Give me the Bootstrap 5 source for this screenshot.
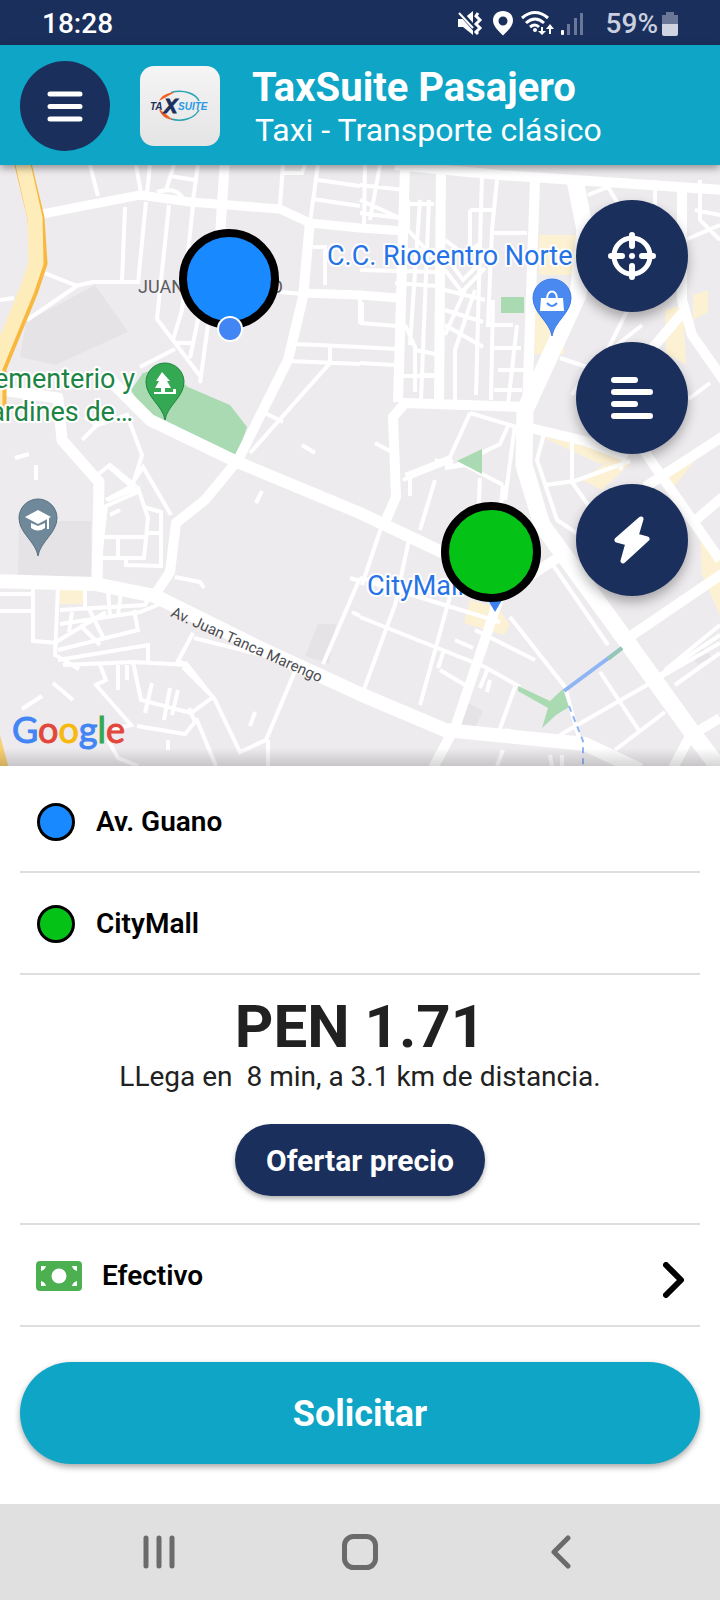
<!DOCTYPE html>
<html lang="es">
<head>
<meta charset="utf-8">
<meta name="viewport" content="width=device-width, initial-scale=1">
<title>TaxSuite Pasajero</title>
<link rel="stylesheet" href="https://cdn.jsdelivr.net/npm/bootstrap@5.3.0/dist/css/bootstrap.min.css">
<style>
  :root { --navy: #1a2f5c; --teal: #0ea5c6; }
  body { font-family: Roboto, "Liberation Sans", sans-serif; color: #212121; background: #fff; }
  svg { display: block; flex: none; }
  .status-bar { background: var(--navy); height: 45px; padding: 2px 42px 0; font-size: 28px; font-weight: 500; line-height: 43px; color: #fff; }
  .battery-text { color: #c9cfde; }
  .app-bar { background: var(--teal); height: 120px; padding: 2px 20px 0; color: #fff; position: relative; z-index: 2; box-shadow: 0 3px 8px rgba(0,0,0,.4); }
  .round-btn { background: var(--navy); border: 0; border-radius: 50%; color: #fff; display: flex; align-items: center; justify-content: center; padding: 0; }
  .menu-btn { width: 90px; height: 90px; }
  .app-logo { width: 80px; height: 80px; border-radius: 14px; background: linear-gradient(#f5f5f5, #e4e4e4); margin-left: 30px; }
  .app-names { padding: 4px 0 0 32px; }
  .app-title { font-size: 40px; line-height: 44px; font-weight: 700; margin: 0; }
  .app-sub { font-size: 32px; line-height: 40px; padding-left: 3px; margin: 0; }
  .map-box { background: #eeebef; overflow: hidden; }
  .map-box > svg { width: 100%; height: auto; }
  .map-box::after { content: ""; position: absolute; left: 0; right: 0; bottom: 0; height: 18px; background: linear-gradient(transparent, rgba(0,0,0,.16)); }
  .map-tools { position: absolute; top: 35px; right: 32px; gap: 30px; z-index: 1; }
  .fab { width: 112px; height: 112px; box-shadow: 0 6px 12px rgba(0,0,0,.3); }
  .sheet { padding: 5px 20px 40px; }
  .line-row { height: 102px; border: 0; border-bottom: 2px solid #dedede; background: none; width: 100%; padding: 2px 15px 0; font-size: 28px; font-weight: 600; color: #000; text-align: left; }
  .place-dot { width: 38px; height: 38px; border-radius: 50%; border: 3px solid #000; margin: 0 21px 0 2px; }
  .dot-blue { background: #1989ff; }
  .dot-green { background: #05c217; }
  .row-label { margin-left: 20px; }
  .fare { border-bottom: 2px solid #dedede; height: 250px; padding-top: 20px; text-align: center; }
  .fare-price { font-size: 60px; line-height: 64px; font-weight: 700; margin: 0; }
  .fare-eta { font-size: 28px; line-height: 36px; margin: 0; white-space: pre-wrap; }
  .offer-btn { background: var(--navy); color: #fff; border: 0; border-radius: 36px; width: 250px; height: 72px; font-size: 30px; font-weight: 700; margin-top: 29px; box-shadow: 0 3px 5px rgba(0,0,0,.3); }
  .request-btn { background: var(--teal); color: #fff; border: 0; border-radius: 51px; width: 100%; height: 102px; padding-top: 3px; font-size: 36px; font-weight: 700; margin-top: 35px; box-shadow: 0 3px 6px rgba(0,0,0,.35); }
  .sys-nav { background: #e0e0e0; height: 96px; padding: 0 58px; }
  .sys-nav button { background: none; border: 0; padding: 0; flex: 1; display: flex; justify-content: center; }
  .label-big { font-size: 27px; paint-order: stroke; stroke: #fff; stroke-width: 4px; stroke-linejoin: round; }
</style>
</head>
<body>
<div class="status-bar d-flex align-items-center">
  <span class="me-auto">18:28</span>
  <svg width="136" height="43" viewBox="456 1 136 43" fill="#fff" aria-hidden="true">
    <path d="M460 18h5l10-8v24l-10-8h-5z"/>
    <path d="M460 9l17 19" stroke="#1a2f5c" stroke-width="5"/><path d="M461 12l14 15" stroke="#fff" stroke-width="2"/>
    <path d="M480 12l-2 3 4 4-4 4 4 4-4 4 2 2" fill="none" stroke="#fff" stroke-width="3"/>
    <path d="M505 10c-6 0-10 4-10 9.500 0 6 6 11 10 15 4-4 10-9 10-15 0-5.500-4-9.500-10-9.500zm0 5.500a4.500 4.500 0 110 9 4.500 4.500 0 010-9z" fill-rule="evenodd"/>
    <g fill="none" stroke="#fff" stroke-width="3"><path d="M524 17q13-11 26 0M528 22q9-8 18 0M532 26q5-4 9 0"/></g>
    <circle cx="537" cy="29" r="2"/>
    <path d="M544 26v5M552 33v-6" stroke="#fff" stroke-width="2"/><path d="M540 30h8l-4 4zM548 28h8l-4-5z"/>
    <rect x="563" y="29" width="3" height="5" rx="1"/>
    <g fill="#6b7796"><rect x="569" y="23" width="3" height="11"/><rect x="576" y="17" width="3" height="17"/><rect x="582" y="12" width="3" height="22"/></g>
  </svg>
  <span class="battery-text ms-3">59%</span>
  <svg width="16" height="24" viewBox="0 0 16 24" class="ms-1" aria-hidden="true"><path d="M4 0h8v3h4v9H0V3h4z" fill="#6b7796"/><path d="M0 12h16v10q0 2-2 2H2q-2 0-2-2z" fill="#d0d4e0"/></svg>
</div>

<header class="app-bar d-flex align-items-center">
  <button class="round-btn menu-btn flex-shrink-0" type="button" aria-label="Menú">
    <svg width="36" height="32" viewBox="0 0 36 32" stroke="#fff" stroke-width="5" stroke-linecap="round"><path d="M3 4h30M3 16.500h30M3 29h30"/></svg>
  </button>
  <div class="app-logo d-flex align-items-center justify-content-center flex-shrink-0">
    <svg width="64" height="34" viewBox="0 0 64 34">
      <path d="M23 3.500C36 0 48 5 51 12M51 21C46 30 34 33 23 30" fill="none" stroke="#2aa3b5" stroke-width="1.500"/>
      <path d="M11 12C14 6 19 4 27 3l-7 4zM11 20C13 27 18 30 25 31l-6-5z" fill="#ef5f22"/>
      <g font-family="'Liberation Sans', sans-serif" font-style="italic" font-weight="700"><text x="2" y="21" font-size="10" fill="#1a2f5c">TA</text><text x="16" y="24" font-size="20" fill="#1a2f5c" stroke="#1a2f5c">X</text><text x="30" y="21" font-size="10" fill="#279be6">SUITE</text></g>
    </svg>
  </div>
  <div class="app-names">
    <h1 class="app-title">TaxSuite Pasajero</h1>
    <p class="app-sub">Taxi - Transporte clásico</p>
  </div>
</header>

<main>
<section class="map-box position-relative" aria-label="Mapa">
  <svg viewBox="0 165 720 601" font-family="Roboto, sans-serif">
    <!-- building and shop areas -->
    <g fill="#e6e3e7"><path d="M95 285l33 47-73 33-35-8 6-35zM19 521h72v62H18zM318 624h18l-7 40-24-8zM468 703l15 8-12 25-12-8zM700 645l12 12-14 7-8-8z"/></g>
    <g fill="#fdf1d3"><path d="M539 235h38v40h-38zM535 310h20l10 44h-31zM60 590h24v14H60zM470 600l28 8 12 17-6 10-40-12zM665 310l18-5 3 60-20-12zM693 295l15-5v22l-15 8zM582 480l40-28 10 10-30 28zM540 436l90 20-30 8zM700 525l20 30v60l-18-40zM665 478l30-18-22 28z"/></g>
    <!-- side streets -->
    <g fill="none" stroke="#fff" stroke-width="4">
      <path d="M90 165l8 31M136 165l5 28M150 165l-3 28M174 165l-8 25M198 165l-5 35M170 176l25 4M125 207l-3 74M146 202l-8 81M169 205l-12 114 43 57M193 205l-11 105-9 30M200 310l-10 48M208 325l-8 58M157 192q20-6 26 7"/>
      <path d="M42 272l35 14-50 34M75 286l18-4h47M0 300l14-2M283 165l-3 40M305 165l-3 8h-18M318 165l-8 57M318 180l42 6M313 199l47 7M313 247h12v38M360 294v30M280 292l23 2M295 344l65 3M289 361l71 3M330 345v18l-80 90M265 413l18 9M302 445l13 8M140 367l35-18M175 343h17"/>
      <path d="M82 440l15-15 30-10 15 40-10 32M82 440l15-15-12-8M15 458l14-4M36 465v15M107 465l25 22M130 487l13-20 28 48M97 475l13-10 24 20-28 15M108 500l30-12 10 30-4 40h-44l6-52 32-14M101 537h43M118 537v20M144 507l17 5v54l-35-1v-8M148 533h15M110 515l10-5"/>
      <path d="M0 594h33M0 611h31M33 588v53l25 2M58 587l-3 68 24 14M85 590v20M60 610l85-5 8-15M60 624l80-12 20-8M72 612l-3 20M88 607l15 30M108 591l2 24M121 593l-3 22M58 650l80-20-4-20M56 642l50-30M80 625l20 20M58 660l90-15v18M63 665l70-3 55 3-10-4 15-28M100 665l6 15-10 5 35 40-20 5M133 662l8 38 50 13 22-16-30-30M137 726l48 8 10-12-6-14M118 665v25M127 665v15M152 683l-7 30M170 688l-6 32M178 690l-6 25M168 740v10M185 662l30 38 25 52 26-12 32-76-104-26M196 718l20 48M108 740l10 18 20 8M53 683l20 17M22 709l20-13"/>
      <path d="M255 712l-5 14M262 491l-6 12M175 577l25 5 4 6M268 740v26M360 578l-37 86M350 578l10 3M360 616l-8-4"/>
      <path d="M365 165l-1 60M380 165l-10 55M360 185l45 5M360 200l40 18M360 213l40 5M408 204h26M408 200v30l24 26M420 200l-10 145M429 200l-8 200M482 175l-2 70-4 150M497 180l-5 50-4 95h25M470 210h24M470 210v55M494 233h33M493 300l-2 100M517 325l-9 80M491 348h30M498 370h26M494 390h28M445 240l20 15 15-12M445 255l18 25 20-20M445 270l17 22 23-24M445 290l40 10M445 310l38 12M445 325l38 22M465 290l-20 45M475 290l-20 60v50M415 350l25 5M420 375h20M400 250h35M360 270l78 2M395 283l43 3M360 323l37 3M360 347l36 2M360 363l34 2M362 302v20M397 376h40M405 325l10 22v45"/>
      <path d="M470 413l50 15M470 413l-20 44-45 18M508 426l-8 18-45 22-20-6M375 443l15 8M445 468l20-3 38 20M503 485l-5 50M515 425l-10 75M480 478l-4 90M435 480l-15 50M403 480l50-20M410 478v18M545 430l-8 30 20 60 30 20M572 440v42l35 50M545 485l30-4 55-20M572 395l20-30 50-40M600 365l30-60M560 358l60 20 70 20 20-15M640 420l-20 50M655 180v25M588 195l20-8 15 25M700 180v40l20 20M695 210l25 5M685 240l35-15"/>
      <path d="M387 522l40 20M382 525l-20 60M410 535l-15 70-35 95M460 560l-40 145M360 617l125 50 35 20M370 582l130 40M440 670l25 15M488 668l-8 20M455 640l18 8M444 650l-6 18M360 578l60 15M510 617l55 70 15 55M475 630l60 30M553 565l55 80M515 687l-18 50M505 730l30 8M560 735l160-92M660 675l60-40M600 672l40 60M615 750l50-38M675 685l45-32M665 670l55-45M503 750l-6 16M550 755l2 11M562 755v11M490 680l-3 12"/>
    </g>
    <!-- parks -->
    <g fill="#a9dab2"><path d="M131 390l12-17 20-6 25 20 42 18 17 22-11 32-46-18-41-22z"/><path d="M501 297h23v16h-23zM457 461l25-12v25zM518 686l32 15 13-12 6 18-13 8-14 13 6-20-30-17z"/></g>
    <!-- main roads -->
    <g fill="none" stroke="#fff" stroke-linejoin="round">
      <path d="M42 214l98-19 50 7 90 7 30 14 50 5 45 3M303 293l57 2 38 3" stroke-width="9"/>
      <path d="M225 160l-6 90M310 222l-7 75-15 63-50 100-33 40-29 23-6 49-16 24" stroke-width="10"/>
      <path d="M0 390l58 8 4 42 37 42-2 102" stroke-width="11"/>
      <path d="M108 378l42 42 85 41 125 52 130 62" stroke-width="12"/>
      <path d="M-5 581l100 3 60 12 105 52 100 46 85 36 140 14 55 26" stroke-width="14"/>
      <path d="M441 168l-2 235M405 167l-7 235M385 522l11-25-3-80 12-14 120 4M535 180l-8 230" stroke-width="10"/>
      <path d="M395 165l105 10 225 15" stroke-width="10"/>
      <path d="M575 180l10 50-7 65-53 115-1 55 18 60 80 110 72 100 31 40" stroke-width="17"/>
      <path d="M682 185v115l10 35 35 50M685 310l-60 70M530 428l55 13 40 15M640 445l80 115M725 435l-80 52M570 550l-70 45-44 130-24 45M725 572l-100 68M720 718l-30 18-18 34M690 525l35-30" stroke-width="10"/>
    </g>
    <path d="M22 160l14 58 3 45-9 27-32 78v50" fill="none" stroke="#f8b83f" stroke-width="17"/>
    <path d="M22 160l13 58 1 45-9 27-32 78v50" fill="none" stroke="#ffecbb" stroke-width="15"/>
    <path d="M-8 725l13 48" stroke="#f8cf73" stroke-width="10"/>
    <path d="M564 691l58-43" stroke="#8fb5f5" stroke-width="4"/><path d="M608 659l14-11" stroke="#93c9b2" stroke-width="4"/>
    <path d="M569 706l14 35v25" fill="none" stroke="#8fb5f5" stroke-width="2" stroke-dasharray="6 5"/>
    <!-- labels -->
    <text x="138" y="293" font-size="18" fill="#5b5b5f">JUAN MONTALVO</text>
    <g class="label-big">
      <text x="327" y="265" fill="#2573e6">C.C. Riocentro Norte</text>
      <text x="367" y="595" fill="#2573e6">CityMall</text>
      <g fill="#1c8444" text-anchor="end"><text x="135" y="388">ementerio y</text><text x="133" y="421">ardines de…</text></g>
    </g>
    <text x="170" y="616" font-size="15" fill="#4c4c50" transform="rotate(24 170 616)">Av. Juan Tanca Marengo</text>
    <!-- place pins -->
    <path d="M165 420c-2-14-19-23-19-38a19 19 0 0138 0c0 15-17 24-19 38z" fill="#34a853" stroke="#1e8540"/>
    <path d="M162 372l-6 9h3l-4 7h6v4h-7v2h22v-5h-3v3h-8v-4h6l-4-7h3z" fill="#fff"/>
    <path d="M552 336c-2-14-19-23-19-38a19 19 0 0138 0c0 15-17 24-19 38z" fill="#4a8af0" stroke="#3a79e4"/>
    <path d="M541 298h22l1 13h-24z" fill="#fff"/><path d="M547 299c0-10 10-10 10 0" fill="none" stroke="#fff" stroke-width="2"/><path d="M547 303q5 6 10 0" fill="none" stroke="#4a8af0" stroke-width="2"/>
    <path d="M38 556c-2-14-19-23-19-38a19 19 0 0138 0c0 15-17 24-19 38z" fill="#70899a" stroke="#566f7f"/>
    <path d="M25 517l13-7 13 7-13 7zM31 523l7 3 7-3v5q-7 5-14 0z" fill="#fff"/><path d="M48 518v11" stroke="#fff" stroke-width="2"/>
    <path d="M488 600h14l-7 12z" fill="#3b82f0"/>
    <!-- trip origin and destination -->
    <circle cx="229" cy="279" r="46" fill="#1989ff" stroke="#000" stroke-width="8"/>
    <circle cx="230" cy="329" r="12" fill="#4285f4" stroke="#fff" stroke-width="2"/>
    <circle cx="491" cy="552" r="46" fill="#05c217" stroke="#000" stroke-width="8"/>
    <text x="12" y="743" font-family="Lato, sans-serif" font-size="36" stroke-width="1"><tspan fill="#4285f4" stroke="#4285f4">G</tspan><tspan fill="#e3473a" stroke="#e3473a">o</tspan><tspan fill="#f6b90f" stroke="#f6b90f">o</tspan><tspan fill="#4285f4" stroke="#4285f4">g</tspan><tspan fill="#34a853" stroke="#34a853">l</tspan><tspan fill="#e3473a" stroke="#e3473a">e</tspan></text>
  </svg>
  <div class="map-tools d-flex flex-column">
    <button class="round-btn fab" type="button" aria-label="Mi ubicación">
      <svg width="48" height="48" viewBox="0 0 48 48" fill="none" stroke="#fff" stroke-width="5"><circle cx="24" cy="24" r="18"/><path d="M24 3v11M24 34v11M3 24h11M34 24h11" stroke-width="6" stroke-linecap="round"/><circle cx="24" cy="24" r="3" fill="#fff" stroke="none"/></svg>
    </button>
    <button class="round-btn fab" type="button" aria-label="Detalles">
      <svg width="42" height="42" viewBox="0 0 42 42" stroke="#fff" stroke-width="6" stroke-linecap="round"><path d="M3 3h21M3 15h36M3 27h21M3 39h36"/></svg>
    </button>
    <button class="round-btn fab" type="button" aria-label="Viaje rápido">
      <svg width="36" height="48" viewBox="0 0 36 48"><path d="M27 3L3 24l11 3-5 18 24-22-11-3z" fill="#fff" stroke="#fff" stroke-width="5" stroke-linejoin="round"/></svg>
    </button>
  </div>
</section>

<section class="sheet">
  <button class="line-row d-flex align-items-center" type="button"><span class="place-dot dot-blue"></span>Av. Guano</button>
  <button class="line-row d-flex align-items-center" type="button"><span class="place-dot dot-green"></span>CityMall</button>
  <div class="fare">
    <p class="fare-price">PEN 1.71</p>
    <p class="fare-eta">LLega en  8 min, a 3.1 km de distancia.</p>
    <button class="offer-btn" type="button">Ofertar precio</button>
  </div>
  <button class="line-row d-flex align-items-center" type="button">
    <svg width="47" height="30" viewBox="-1 0 47 30"><rect width="46" height="30" rx="4" fill="#4caf50"/><circle cx="23" cy="15" r="7.500" fill="#fff"/><path d="M5 5h5q-1 4-5 5zM41 5h-5q1 4 5 5zM5 25h5q-1-4-5-5zM41 25h-5q1-4 5-5z" fill="#fff"/></svg>
    <span class="row-label flex-grow-1">Efectivo</span>
    <svg class="mt-2" width="22" height="36" viewBox="0 0 22 36" fill="none" stroke="#000" stroke-width="6" stroke-linecap="round" stroke-linejoin="round"><path d="M3 3l15 15L3 33"/></svg>
  </button>
  <button class="request-btn" type="button">Solicitar</button>
</section>
</main>

<nav class="sys-nav d-flex align-items-center" aria-label="Sistema">
  <button type="button" aria-label="Recientes"><svg width="32" height="34" viewBox="0 0 32 34" stroke="#6b6b6b" stroke-width="5" stroke-linecap="round"><path d="M3 3v28M16 3v28M29 3v28"/></svg></button>
  <button type="button" aria-label="Inicio"><svg width="36" height="36" viewBox="0 0 36 36"><rect x="2.500" y="2.500" width="31" height="31" rx="9" fill="none" stroke="#6b6b6b" stroke-width="5"/></svg></button>
  <button type="button" aria-label="Atrás"><svg width="20" height="34" viewBox="0 0 20 34" fill="none" stroke="#6b6b6b" stroke-width="5" stroke-linecap="round" stroke-linejoin="round"><path d="M17 3L3 17l14 14"/></svg></button>
</nav>
<script src="https://cdn.jsdelivr.net/npm/bootstrap@5.3.0/dist/js/bootstrap.bundle.min.js"></script>
</body>
</html>
